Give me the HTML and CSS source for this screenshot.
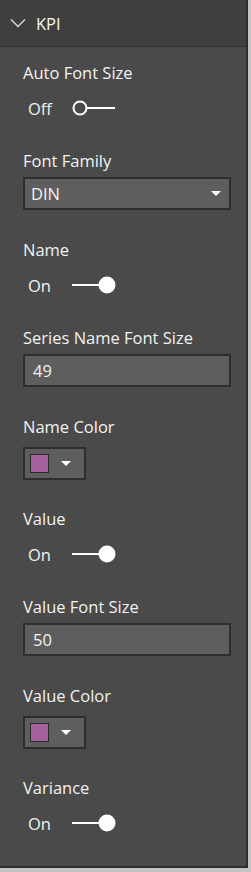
FILE: index.html
```html
<!DOCTYPE html>
<html lang="en">
  <head>
    <meta charset="UTF-8" />
    <meta name="viewport" content="width=device-width, initial-scale=1.0" />
    <title>KPI format pane</title>
    <link rel="stylesheet" href="styles.css">
  </head>
  <body>
    <div class="panel">
      <div class="header">
        <svg class="chevron" width="16" height="10" viewBox="0 0 16 10">
          <polyline points="1,1.5 8,8.5 15,1.5" fill="none" stroke="#d6d6d6" stroke-width="1.5" />
        </svg>
        <span class="title">KPI</span>
      </div>

      <div class="content">
        <div class="field toggle-field">
          <div class="label">Auto Font Size</div>
          <div class="toggle-row">
            <span class="state">Off</span>
            <svg class="toggle" width="46" height="20" viewBox="0 0 46 20">
              <circle cx="8" cy="10" r="6.5" fill="none" stroke="#fff" stroke-width="2" />
              <line x1="15" y1="10" x2="43" y2="10" stroke="#fff" stroke-width="2" />
            </svg>
          </div>
        </div>

        <div class="field box-field">
          <div class="label">Font Family</div>
          <div class="box select">
            <span>DIN</span>
            <span class="arrow"></span>
          </div>
        </div>

        <div class="field toggle-field">
          <div class="label">Name</div>
          <div class="toggle-row">
            <span class="state">On</span>
            <svg class="toggle" width="46" height="20" viewBox="0 0 46 20">
              <line x1="0" y1="10" x2="28" y2="10" stroke="#fff" stroke-width="2" />
              <circle cx="35" cy="10" r="8.5" fill="#fff" />
            </svg>
          </div>
        </div>

        <div class="field box-field">
          <div class="label">Series Name Font Size</div>
          <div class="box input">49</div>
        </div>

        <div class="field color-field">
          <div class="label">Name Color</div>
          <div class="box color">
            <span class="swatch"></span>
            <span class="arrow"></span>
          </div>
        </div>

        <div class="field toggle-field">
          <div class="label">Value</div>
          <div class="toggle-row">
            <span class="state">On</span>
            <svg class="toggle" width="46" height="20" viewBox="0 0 46 20">
              <line x1="0" y1="10" x2="28" y2="10" stroke="#fff" stroke-width="2" />
              <circle cx="35" cy="10" r="8.5" fill="#fff" />
            </svg>
          </div>
        </div>

        <div class="field box-field">
          <div class="label">Value Font Size</div>
          <div class="box input">50</div>
        </div>

        <div class="field color-field">
          <div class="label">Value Color</div>
          <div class="box color">
            <span class="swatch"></span>
            <span class="arrow"></span>
          </div>
        </div>

        <div class="field toggle-field">
          <div class="label">Variance</div>
          <div class="toggle-row">
            <span class="state">On</span>
            <svg class="toggle" width="46" height="20" viewBox="0 0 46 20">
              <line x1="0" y1="10" x2="28" y2="10" stroke="#fff" stroke-width="2" />
              <circle cx="35" cy="10" r="8.5" fill="#fff" />
            </svg>
          </div>
        </div>
      </div>
    </div>
  </body>
</html>
```

FILE: styles.css
```css
* {
    margin: 0;
    padding: 0;
    box-sizing: border-box;
}

body {
    background-color: #c4c4c4;
    font-family: 'Open Sans', 'Noto Sans', sans-serif;
    color: #f2f2f2;
}

.panel {
    width: 248px;
    height: 868px;
    background-color: #4a4a4a;
    border-right: 2px solid #2c2c2c;
    border-bottom: 2px solid #2c2c2c;
}

.header {
    display: flex;
    align-items: center;
    height: 47px;
    padding-left: 10px;
    background-color: #3f3f3f;
    border-bottom: 1px solid #333;
}

.chevron {
    margin-right: 10px;
}

.title {
    font-size: 16.5px;
    color: #f4f4f4;
}

.content {
    padding: 16px 15px 0 23px;
}

.label {
    font-size: 16.5px;
    line-height: 20px;
    height: 20px;
    white-space: nowrap;
}

.toggle-field {
    margin-bottom: 24px;
}

.box-field {
    margin-bottom: 30px;
}

.color-field {
    margin-bottom: 29px;
}

.toggle-row {
    display: flex;
    align-items: center;
    height: 38px;
    margin-top: 6px;
    padding-left: 5px;
}

.state {
    width: 44px;
    font-size: 16.5px;
}

.box {
    display: flex;
    align-items: center;
    height: 33px;
    margin-top: 6px;
    background-color: #5e5e5e;
    border: 2px solid #2e2e2e;
    font-size: 16.5px;
}

.select {
    justify-content: space-between;
    padding: 0 8px 0 6px;
}

.input {
    padding-left: 8px;
}

.color {
    width: 63px;
    margin-top: 10px;
    padding-left: 5px;
}

.swatch {
    width: 19px;
    height: 19px;
    background-color: #a5619b;
    border: 1px solid #2a2a2a;
    margin-right: 12px;
}

.arrow {
    width: 0;
    height: 0;
    border-left: 5px solid transparent;
    border-right: 5px solid transparent;
    border-top: 5px solid #fff;
}
```
